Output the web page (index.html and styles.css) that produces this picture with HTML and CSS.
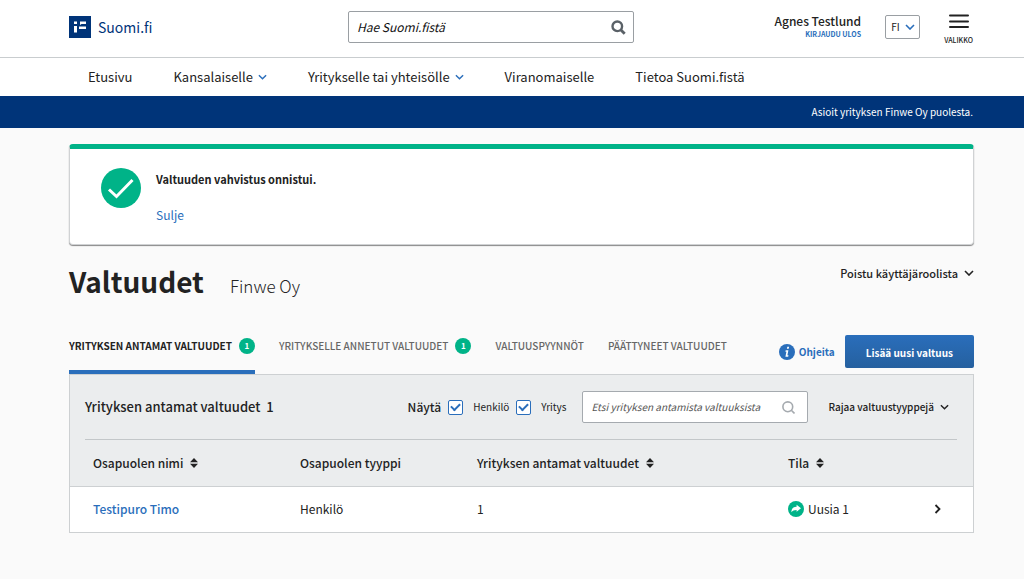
FILE: index.html
```html
<!DOCTYPE html>
<html lang="fi">
<head>
<meta charset="utf-8">
<meta name="viewport" content="width=device-width, initial-scale=1">
<title>Valtuudet - Suomi.fi</title>
<link rel="stylesheet" href="styles.css">
</head>
<body>
<svg class="sprite" aria-hidden="true">
  <symbol id="chevron" viewBox="0 0 10 6"><path d="M1 1l4 4 4-4" fill="none" stroke="currentColor" stroke-width="1.6"/></symbol>
  <symbol id="sort" viewBox="0 0 8 10"><path d="M0 4.2L4 0l4 4.2zM0 5.8h8L4 10z" fill="currentColor"/></symbol>
</svg>
<header class="header">
  <a class="logo" href="#">
    <svg class="logo-mark" viewBox="0 0 22 22" aria-hidden="true"><path fill="#003479" d="M0 0h22v22H0z"/><path fill="#fff" d="M5 5.500h3v2.500H5zM5 10h3v6.500H5zM11 5.500h6V8h-4.500L11 9zM10 10.500h7V13h-7z"/></svg>
    <span>Suomi.fi</span>
  </a>
  <form class="site-search" role="search">
    <input class="site-search-input" type="search" placeholder="Hae Suomi.fistä" aria-label="Hae Suomi.fistä">
    <button class="icon-button" type="button" aria-label="Hae"><svg width="15" height="15" viewBox="0 0 15 15" fill="none" stroke="#5a6167"><circle cx="6.300" cy="6.300" r="4.800" stroke-width="2.400"/><path d="M9.700 9.700l4 4" stroke-width="2.800"/></svg></button>
  </form>
  <div class="user">
    <strong class="user-name">Agnes Testlund</strong>
    <a class="logout" href="#">KIRJAUDU ULOS</a>
  </div>
  <div class="language">
    <select class="language-select" aria-label="Kieli"><option>FI</option></select>
    <svg class="language-arrow" width="10" height="6"><use href="#chevron"/></svg>
  </div>
  <button class="menu-button" type="button">
    <svg width="20" height="15" viewBox="0 0 20 15" fill="none" stroke="#222" stroke-width="2" stroke-linecap="round"><path d="M1 1.500h18M1 7.500h18M1 13h18"/></svg>
    <span>VALIKKO</span>
  </button>
</header>
<nav class="nav">
  <a class="nav-link" href="#">Etusivu</a>
  <a class="nav-link" href="#">Kansalaiselle <svg class="nav-arrow" width="9" height="6"><use href="#chevron"/></svg></a>
  <a class="nav-link" href="#">Yritykselle tai yhteisölle <svg class="nav-arrow" width="9" height="6"><use href="#chevron"/></svg></a>
  <a class="nav-link" href="#">Viranomaiselle</a>
  <a class="nav-link" href="#">Tietoa Suomi.fistä</a>
</nav>
<div class="role-bar">Asioit yrityksen Finwe Oy puolesta.</div>
<main class="main">
  <section class="notice" role="status">
    <svg class="notice-icon" width="40" height="40" viewBox="0 0 40 40"><circle cx="20" cy="20" r="20" fill="#00b388"/><path d="M8 21.500l7.500 7L31.500 12" fill="none" stroke="#fff" stroke-width="3"/></svg>
    <div class="notice-body">
      <strong class="notice-text">Valtuuden vahvistus onnistui.</strong>
      <a class="link" href="#">Sulje</a>
    </div>
  </section>
  <div class="heading">
    <h1 class="title">Valtuudet</h1>
    <span class="company">Finwe Oy</span>
    <button class="text-button leave-role" type="button">Poistu käyttäjäroolista <svg width="10" height="6"><use href="#chevron"/></svg></button>
  </div>
  <div class="tab-row">
    <div class="tabs" role="tablist">
      <button class="tab tab-active" type="button" role="tab" aria-selected="true">YRITYKSEN ANTAMAT VALTUUDET <span class="badge">1</span></button>
      <button class="tab" type="button" role="tab">YRITYKSELLE ANNETUT VALTUUDET <span class="badge">1</span></button>
      <button class="tab" type="button" role="tab">VALTUUSPYYNNÖT</button>
      <button class="tab" type="button" role="tab">PÄÄTTYNEET VALTUUDET</button>
    </div>
    <div class="actions">
      <a class="help" href="#"><svg width="16" height="16" viewBox="0 0 16 16"><circle cx="8" cy="8" r="8" fill="#2a6ebb"/><path d="M8.300 2.800h1.800l-.4 2H7.900zM6.700 6.200h2.700l-1 5h1.100l-.3 1.500H6.400l1-5H6.400z" fill="#fff"/></svg>Ohjeita</a>
      <button class="primary" type="button">Lisää uusi valtuus</button>
    </div>
  </div>
  <section class="panel">
    <div class="toolbar">
      <h2 class="panel-title">Yrityksen antamat valtuudet&nbsp; 1</h2>
      <div class="filters" role="group" aria-labelledby="filter-title">
        <span class="filter-title" id="filter-title">Näytä</span>
        <label class="check"><input class="checkbox" type="checkbox" checked>Henkilö</label>
        <label class="check"><input class="checkbox" type="checkbox" checked>Yritys</label>
      </div>
      <div class="list-search">
        <input class="list-search-input" type="search" placeholder="Etsi yrityksen antamista valtuuksista" aria-label="Etsi yrityksen antamista valtuuksista">
        <svg width="13" height="13" viewBox="0 0 13 13" fill="none" stroke="#a5aaaf" stroke-width="1.600"><circle cx="5.800" cy="5.800" r="4.900"/><path d="M9.300 9.300l3.200 3.200"/></svg>
      </div>
      <button class="text-button" type="button">Rajaa valtuustyyppejä <svg width="9" height="6"><use href="#chevron"/></svg></button>
    </div>
    <table class="table">
      <colgroup><col class="col-name"><col class="col-type"><col class="col-count"><col class="col-state"><col></colgroup>
      <thead>
        <tr>
          <th scope="col"><button class="sort" type="button">Osapuolen nimi <svg width="8" height="10"><use href="#sort"/></svg></button></th>
          <th scope="col">Osapuolen tyyppi</th>
          <th scope="col"><button class="sort" type="button">Yrityksen antamat valtuudet <svg width="8" height="10"><use href="#sort"/></svg></button></th>
          <th scope="col"><button class="sort" type="button">Tila <svg width="8" height="10"><use href="#sort"/></svg></button></th>
          <td></td>
        </tr>
      </thead>
      <tbody>
        <tr>
          <td><a class="link link-strong" href="#">Testipuro Timo</a></td>
          <td>Henkilö</td>
          <td>1</td>
          <td><span class="state"><svg width="16" height="16" viewBox="0 0 16 16"><circle cx="8" cy="8" r="8" fill="#00b388"/><path d="M3.300 11.300C3.500 7.500 5.300 5.800 8.600 5.700V3.700L13 7.300l-4.400 3.500V8.900C6 8.900 4.700 9.600 3.300 11.300z" fill="#fff"/></svg>Uusia 1</span></td>
          <td class="open-cell"><button class="icon-button" type="button" aria-label="Avaa"><svg width="8" height="10" viewBox="0 0 8 10" fill="none" stroke="#222" stroke-width="1.800"><path d="M1.500 1l4 4-4 4"/></svg></button></td>
        </tr>
      </tbody>
    </table>
  </section>
</main>
</body>
</html>
```
FILE: styles.css
```css
* { box-sizing: border-box; }
body {
  margin: 0;
  background: #fafafa;
  color: #222;
  font: 12px/16px "Noto Sans CJK SC", "Noto Sans", sans-serif;
}
button, input, select { font: inherit; color: inherit; }
button { padding: 0; border: 0; background: none; white-space: nowrap; cursor: pointer; }
a { color: inherit; text-decoration: none; }
svg { flex: none; }
.sprite { position: absolute; width: 0; height: 0; overflow: hidden; }
.icon-button { display: flex; }

.header {
  display: flex;
  height: 58px;
  padding: 0 51px 0 69px;
  background: #fff;
  border-bottom: 1px solid #c9cdcf;
}
.logo { display: flex; align-items: center; align-self: flex-start; gap: 7px; margin-top: 16px; color: #003479; font-size: 14px; line-height: 22px; width: 279px; }
.logo-mark { width: 22px; height: 22px; }
.site-search {
  display: flex;
  align-items: center;
  width: 286px;
  height: 32px;
  margin-top: 11px;
  padding: 0 7px 0 8px;
  border: 1px solid #9a9fa3;
  border-radius: 2px;
}
input[type="search"] { flex: 1; min-width: 0; padding: 0; border: 0; outline: 0; background: none; font-style: italic; }
.site-search-input::placeholder { color: #111; opacity: 1; }
.user { display: flex; flex-direction: column; align-items: flex-end; margin: 13px 24px 0 auto; }
.user-name { font-size: 12px; font-weight: 500; }
.logout { color: #2a6ebb; font-size: 7px; font-weight: 700; line-height: 10px; }
.language { position: relative; margin-top: 15px; }
.language-select {
  appearance: none;
  width: 35px;
  height: 24px;
  padding: 0 0 0 5px;
  border: 1px solid #9a9fa3;
  border-radius: 2px;
  background: #fff;
  font-size: 10px;
}
.language-arrow { position: absolute; right: 5px; top: 9px; color: #2a6ebb; pointer-events: none; }
.menu-button { display: flex; flex-direction: column; align-items: center; align-self: flex-start; gap: 6px; margin: 14px 0 0 24px; font-size: 7px; font-weight: 500; line-height: 10px; }

.nav { display: flex; align-items: center; gap: 41px; height: 38px; padding: 0 88px 1px; background: #fff; font-size: 13px; white-space: nowrap; }
.nav-link { display: flex; align-items: center; gap: 5px; }
.nav-arrow { color: #2a6ebb; }
.role-bar { padding: 8px 51px; background: #003479; color: #fff; font-size: 10px; text-align: right; }

.main { padding: 16px 50px 47px 69px; }
.notice {
  display: flex;
  gap: 15px;
  padding: 19px 31px 20px;
  background: #fff;
  border: 1px solid #d0d2d4;
  border-top: 5px solid #00b388;
  border-radius: 4px;
  box-shadow: 0 1px 1px #888;
}
.notice-body { display: flex; flex-direction: column; gap: 20px; padding: 3px 0 1px; }
.notice-text { font-size: 11px; font-weight: 700; }
.link { color: #2a6ebb; }
.link-strong { font-weight: 500; }

.heading { display: flex; align-items: baseline; gap: 26px; margin-top: 16px; }
.title { margin: 0; font-size: 28px; font-weight: 700; line-height: 40px; }
.company { font-size: 17px; font-weight: 300; }
.text-button { display: flex; align-items: center; gap: 6px; font-size: 11px; font-weight: 500; }
.leave-role { align-self: flex-start; margin: 4px 0 0 auto; }

.tab-row { display: flex; justify-content: space-between; margin-top: 34px; white-space: nowrap; }
.tabs { display: flex; gap: 24px; }
.tab { display: flex; gap: 7px; height: 39px; padding-top: 3px; border-bottom: 4px solid transparent; color: #666; font-size: 10px; font-weight: 500; line-height: 16px; }
.tab-active { border-color: #2a6ebb; color: #222; font-weight: 700; }
.badge { width: 16px; height: 16px; border-radius: 50%; background: #00b388; color: #fff; font-size: 8px; font-weight: 700; }
.actions { display: flex; align-items: flex-start; gap: 10px; }
.help { display: flex; align-items: center; gap: 4px; height: 33px; color: #2a6ebb; font-size: 10px; font-weight: 700; }
.primary { height: 33px; padding: 2px 21px 0; border-radius: 2px; background: linear-gradient(#2a6ebb, #25609f); color: #fff; font-size: 10px; font-weight: 700; }

.panel { border: 1px solid #cdd0d2; background: #ebedee; }
.toolbar { display: flex; align-items: center; height: 65px; margin: 0 16px 0 15px; border-bottom: 1px solid #c3c7c9; white-space: nowrap; }
.panel-title { margin: 0 auto 0 0; font-size: 13px; font-weight: 500; }
.filters { display: flex; align-items: center; gap: 7px; margin-right: 16px; }
.filter-title { font-weight: 500; }
.check { display: flex; align-items: center; gap: 10px; font-size: 10px; }
.checkbox {
  appearance: none;
  width: 15px;
  height: 15px;
  margin: 0;
  border: 1px solid #2a6ebb;
  border-radius: 2px;
  background: #fff;
  display: grid;
  place-items: center;
}
.checkbox:checked::before { content: ""; width: 7px; height: 4px; border: solid #2a6ebb; border-width: 0 0 2px 2px; transform: translateY(-1px) rotate(-45deg); }
.list-search { display: flex; align-items: center; width: 226px; height: 32px; margin-right: 20px; padding: 0 12px 0 8px; border: 1px solid #a5aaaf; border-radius: 2px; background: #fff; }
.list-search-input { font-size: 10px; }
.list-search-input::placeholder { color: #555; opacity: 1; }
.toolbar .text-button { margin-right: 8px; font-size: 10px; }

.table { width: 100%; table-layout: fixed; border-collapse: collapse; }
.col-name { width: 207px; }
.col-type { width: 177px; }
.col-count { width: 311px; }
.col-state { width: 146px; }
.table th, .table td { height: 46px; padding: 0 0 0 23px; text-align: left; font-weight: 400; }
.table th { font-weight: 500; }
.table tbody tr { border-top: 1px solid #cdd0d2; background: #fff; }
.sort { display: flex; align-items: center; gap: 7px; font-weight: 500; }
.state { display: flex; align-items: center; gap: 4px; }
```
